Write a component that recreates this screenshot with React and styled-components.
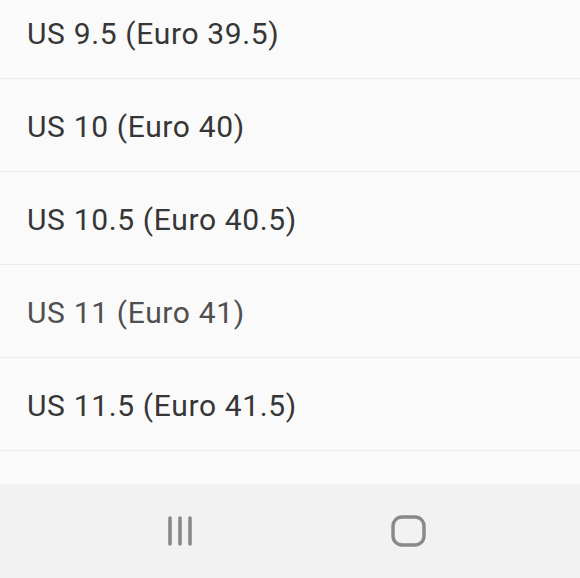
import React from "react";
import styled, { createGlobalStyle } from "styled-components";

const GlobalStyle = createGlobalStyle`
  html, body {
    margin: 0;
    padding: 0;
    background: #fafafa;
  }
  body {
    font-family: Roboto, "Noto Sans", sans-serif;
  }
`;

const sizes = [
  { label: "US 9.5 (Euro 39.5)" },
  { label: "US 10 (Euro 40)" },
  { label: "US 10.5 (Euro 40.5)" },
  { label: "US 11 (Euro 41)", muted: true },
  { label: "US 11.5 (Euro 41.5)" },
];

const Screen = styled.div`
  width: 580px;
  height: 578px;
  display: flex;
  flex-direction: column;
  background: #fafafa;
  overflow: hidden;
`;

const Viewport = styled.div`
  flex: 1;
  overflow: hidden;
`;

const List = styled.ul`
  list-style: none;
  margin: -14px 0 0;
  padding: 0;
`;

const Row = styled.li`
  display: flex;
  align-items: center;
  padding: 3px 27px 0;
  box-sizing: border-box;
  height: 93px;
  border-bottom: 1px solid #ececec;
  font-size: 30px;
  color: ${(p) => (p.$muted ? "#4f4f4f" : "#363636")};
  letter-spacing: 0.65px;
`;

const NavBar = styled.nav`
  height: 94px;
  flex-shrink: 0;
  background: #f2f2f2;
  display: grid;
  grid-template-columns: 1fr 1fr;
  align-items: center;
`;

const NavButton = styled.button`
  border: none;
  background: none;
  padding: 0;
  display: flex;
  justify-content: flex-start;
  padding-left: ${(p) => p.$offset}px;
  color: #898989;
`;

const RecentsIcon = () => (
  <svg width="28" height="32" viewBox="0 0 28 32">
    <g stroke="currentColor" strokeWidth="3.6" strokeLinecap="round">
      <line x1="4" y1="3" x2="4" y2="29" />
      <line x1="14" y1="3" x2="14" y2="29" />
      <line x1="24" y1="3" x2="24" y2="29" />
    </g>
  </svg>
);

const HomeIcon = () => (
  <svg width="35" height="32" viewBox="0 0 35 32">
    <rect
      x="2"
      y="2"
      width="31"
      height="28"
      rx="9"
      fill="none"
      stroke="currentColor"
      strokeWidth="3.4"
    />
  </svg>
);

export default function App() {
  return (
    <>
      <GlobalStyle />
      <Screen>
        <Viewport>
          <List>
            {sizes.map((s) => (
              <Row key={s.label} $muted={s.muted}>
                {s.label}
              </Row>
            ))}
          </List>
        </Viewport>
        <NavBar>
          <NavButton $offset={166}>
            <RecentsIcon />
          </NavButton>
          <NavButton $offset={101}>
            <HomeIcon />
          </NavButton>
        </NavBar>
      </Screen>
    </>
  );
}
